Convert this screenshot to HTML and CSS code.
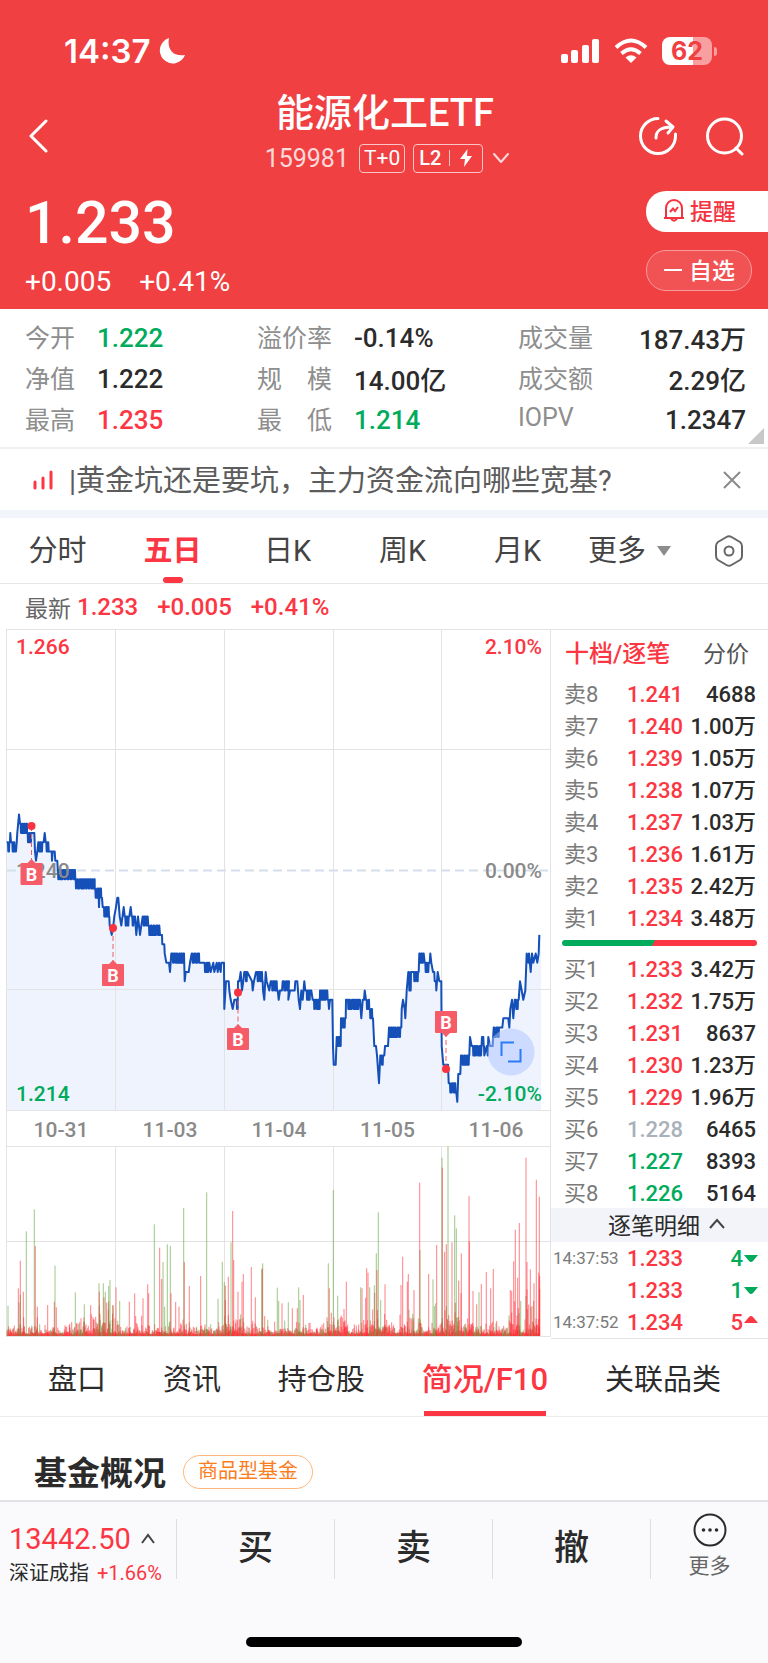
FILE: index.html
```html
<!DOCTYPE html>
<html lang="zh-CN">
<head>
<meta charset="utf-8">
<meta name="viewport" content="width=device-width, initial-scale=1">
<title>能源化工ETF 159981</title>
<link rel="stylesheet" href="styles.css">
</head>
<body>
<header class="hero">
  <div class="status">
    <span class="clock">14:37</span>
    <svg class="moon" width="28" height="28" viewBox="0 0 28 28"><path d="M11 1C9 11 14 20 27 18A13 13 0 1 1 11 1Z" fill="#fff"/></svg>
    <span class="status-right">
      <svg width="40" height="26" viewBox="0 0 40 26" fill="#fff"><rect x="1" y="16" width="7" height="9" rx="2"/><rect x="11" y="12" width="7" height="13" rx="2"/><rect x="22" y="7" width="7" height="18" rx="2"/><rect x="32" y="1" width="7" height="24" rx="2"/></svg>
      <svg width="34" height="26" viewBox="0 0 34 26" fill="none" stroke="#fff" stroke-width="4"><path d="M2 9.500Q17 -4.500 32 9.500"/><path d="M7.500 15.500Q17 7 26.500 15.500"/><path d="M17 25L11.500 19.500Q17 15 22.500 19.500Z" fill="#fff" stroke="none"/></svg>
      <span class="battery">62</span>
    </span>
  </div>
  <div class="nav">
    <button class="icon-btn back" aria-label="返回"><svg width="20" height="34" viewBox="0 0 20 34"><path d="M17 2L2 17L17 32" /></svg></button>
    <div class="title">
      <h1>能源化工ETF</h1>
      <div class="sub"><span class="code">159981</span><span class="tag">T+0</span><span class="tag tag-l2">L2<i></i><svg width="14" height="18" viewBox="0 0 14 18"><path d="M8.500 0L1 10H6L5 18L13 7H8Z" fill="#fff"/></svg></span>
      <svg class="caret" width="16" height="12" viewBox="0 0 16 12"><path d="M1 2L8 10L15 2"/></svg></div>
    </div>
    <div class="tools">
      <button class="icon-btn" aria-label="分享"><svg width="40" height="40" viewBox="0 0 40 40"><path d="M20 2.500A17.500 17.500 0 1 0 37.500 20V18M18 22C18 15 22 11 34 11M28 5L35 11L30 17"/></svg></button>
      <button class="icon-btn" aria-label="搜索"><svg width="40" height="40" viewBox="0 0 40 40"><circle cx="19.500" cy="20" r="17"/><path d="M31 32L37 38"/></svg></button>
    </div>
  </div>
  <div class="quote">
    <div>
      <div class="price">1.233</div>
      <div class="change"><span>+0.005</span><span>+0.41%</span></div>
    </div>
    <div class="pills">
      <button class="pill remind"><svg width="24" height="24" viewBox="0 0 24 24"><path d="M2 20H22M4 20V10A8 8 0 0 1 20 10V20M9 20.500Q12 25 15 20.500M8 14L11 10.500L13 13L16 9"/></svg>提醒</button>
      <button class="pill fav"><svg width="20" height="20" viewBox="0 0 20 20"><path d="M1 11H19"/></svg>自选</button>
    </div>
  </div>
</header>

<section class="stats">
  <dl>
    <div><dt>今开</dt><dd class="down">1.222</dd></div>
    <div><dt>净值</dt><dd>1.222</dd></div>
    <div><dt>最高</dt><dd class="up">1.235</dd></div>
  </dl>
  <dl class="wide">
    <div><dt>溢价率</dt><dd>-0.14%</dd></div>
    <div><dt>规　模</dt><dd>14.00亿</dd></div>
    <div><dt>最　低</dt><dd class="down">1.214</dd></div>
  </dl>
  <dl class="end">
    <div><dt>成交量</dt><dd>187.43万</dd></div>
    <div><dt>成交额</dt><dd>2.29亿</dd></div>
    <div><dt>IOPV</dt><dd>1.2347</dd></div>
  </dl>
  <svg class="corner" width="16" height="16" viewBox="0 0 16 16"><path d="M16 0V16H0Z" fill="#c8c8c8"/></svg>
</section>

<section class="notice">
  <svg width="22" height="20" viewBox="0 0 22 20" fill="none" stroke="#fc3642" stroke-width="3" stroke-linecap="round"><path d="M3 12V18M11 8V18M19 2V18"/></svg>
  <a href="#">|黄金坑还是要坑，主力资金流向哪些宽基?</a>
  <button class="close" aria-label="关闭"><svg width="18" height="18" viewBox="0 0 18 18"><path d="M1 1L17 17M17 1L1 17"/></svg></button>
</section>

<nav class="periods">
  <button>分时</button>
  <button class="on">五日</button>
  <button>日K</button>
  <button>周K</button>
  <button>月K</button>
  <button class="more">更多<svg width="16" height="12" viewBox="0 0 16 12"><path d="M1 1H15L8 11Z" fill="#8c8c8c"/></svg></button>
  <button class="set" aria-label="设置"><svg class="gear" width="32" height="34" viewBox="0 0 32 34"><path d="M13.500 3Q16 1.500 18.500 3L27 8Q29 9.500 29 12V22Q29 24.500 27 26L18.500 31Q16 32.500 13.500 31L5 26Q3 24.500 3 22V12Q3 9.500 5 8Z"/><circle cx="16" cy="17" r="4.500"/></svg></button>
</nav>

<p class="latest">最新<b>1.233</b><b>+0.005</b><b>+0.41%</b></p>

<main class="board">
  <svg class="chart" viewBox="0 0 551 708" role="img" aria-label="五日走势">
    <path id="area" class="area"/>
    <path class="grid" d="M6 .5H551M6 120.500H551M6 360.500H551M6 481.500H551M6 517.500H551M6 612.500H551M6 707.500H551M6.500 0V708M550.500 0V708M115.500 0V481M115.500 517V708M224.500 0V481M224.500 517V708M333.500 0V481M333.500 517V708M441.500 0V481M441.500 517V708"/>
    <path class="zero" d="M7 241.500H551"/>
    <path id="line" class="line"/>
    <text x="16" y="249" class="mid">1.240</text>
    <g id="volume"></g>
    <text x="16" y="25" class="t-up">1.266</text>
    <text x="542" y="25" class="t-up r">2.10%</text>
    <text x="542" y="249" class="mid r">0.00%</text>
    <g id="marks"></g>
    <circle cx="511" cy="423" r="23.500" fill="#a9c4ff" fill-opacity=".5"/>
    <path d="M501.500 427V413.500H514M508 432.500H520.500V420" fill="none" stroke="#2b7cf6" stroke-width="2"/>
    <text x="16" y="472" class="t-down">1.214</text>
    <text x="542" y="472" class="t-down r">-2.10%</text>
    <g class="dates"><text x="61" y="508">10-31</text><text x="170" y="508">11-03</text><text x="279" y="508">11-04</text><text x="387.500" y="508">11-05</text><text x="496" y="508">11-06</text></g>
  </svg>

  <aside class="book">
    <div class="book-tabs"><button class="on">十档/逐笔</button><button>分价</button></div>
    <table class="up-rows">
      <tr><th>卖8</th><td>1.241</td><td>4688</td></tr>
      <tr><th>卖7</th><td>1.240</td><td>1.00万</td></tr>
      <tr><th>卖6</th><td>1.239</td><td>1.05万</td></tr>
      <tr><th>卖5</th><td>1.238</td><td>1.07万</td></tr>
      <tr><th>卖4</th><td>1.237</td><td>1.03万</td></tr>
      <tr><th>卖3</th><td>1.236</td><td>1.61万</td></tr>
      <tr><th>卖2</th><td>1.235</td><td>2.42万</td></tr>
      <tr><th>卖1</th><td>1.234</td><td>3.48万</td></tr>
    </table>
    <div class="ratio"></div>
    <table class="up-rows">
      <tr><th>买1</th><td>1.233</td><td>3.42万</td></tr>
      <tr><th>买2</th><td>1.232</td><td>1.75万</td></tr>
      <tr><th>买3</th><td>1.231</td><td>8637</td></tr>
      <tr><th>买4</th><td>1.230</td><td>1.23万</td></tr>
      <tr><th>买5</th><td>1.229</td><td>1.96万</td></tr>
      <tr><th>买6</th><td class="flat">1.228</td><td>6465</td></tr>
      <tr><th>买7</th><td class="down">1.227</td><td>8393</td></tr>
      <tr><th>买8</th><td class="down">1.226</td><td>5164</td></tr>
    </table>
    <button class="detail">逐笔明细<svg width="16" height="12" viewBox="0 0 16 12"><path d="M1 10L8 2L15 10"/></svg></button>
    <table class="up-rows ticks">
      <tr><th>14:37:53</th><td>1.233</td><td class="down">4<svg width="14" height="16" viewBox="0 0 14 16"><path d="M0 5H14L9 11Q7 13 5 11Z" fill="#00ab5b"/></svg></td></tr>
      <tr><th></th><td>1.233</td><td class="down">1<svg width="14" height="16" viewBox="0 0 14 16"><path d="M0 5H14L9 11Q7 13 5 11Z" fill="#00ab5b"/></svg></td></tr>
      <tr><th>14:37:52</th><td>1.234</td><td class="up">5<svg width="14" height="16" viewBox="0 0 14 16"><path d="M0 9H14L9 3Q7 1 5 3Z" fill="#fc3642"/></svg></td></tr>
    </table>
  </aside>
</main>

<nav class="sections">
  <button>盘口</button><button>资讯</button><button>持仓股</button><button class="on">简况/F10</button><button>关联品类</button>
</nav>

<section class="overview"><h2>基金概况</h2><span>商品型基金</span></section>

<footer class="dock">
  <div class="actions">
    <button class="index"><span class="idx">13442.50<svg width="16" height="12" viewBox="0 0 16 12"><path d="M2 10L8 2L14 10"/></svg></span><span class="name">深证成指 <em>+1.66%</em></span></button>
    <button class="act">买</button>
    <button class="act">卖</button>
    <button class="act">撤</button>
    <button class="act last"><svg width="34" height="34" viewBox="0 0 34 34"><circle cx="17" cy="17" r="15.500" fill="none" stroke="#2b2b2b" stroke-width="2"/><g fill="#2b2b2b"><circle cx="10.500" cy="17" r="1.800"/><circle cx="17" cy="17" r="1.800"/><circle cx="23.500" cy="17" r="1.800"/></g></svg>更多</button>
  </div>
  <div class="home"></div>
</footer>
<script src="chart.js"></script>
</body>
</html>
```
FILE: styles.css
```css
* { box-sizing: border-box; }
body {
  margin: 0;
  background: #fff;
  color: #2b2b2b;
  font-family: Roboto, "Noto Sans CJK SC", sans-serif;
  font-size: 24px;
}
button {
  border: 0;
  padding: 0;
  background: none;
  color: inherit;
  font: inherit;
}
svg { display: block; flex: none; }
h1, h2, p, dl, dd { margin: 0; }
a { color: inherit; text-decoration: none; }
.up { color: #fc3642; }
.down { color: #00ab5b; }

.hero {
  background: #f04042;
  color: #fff;
  padding-bottom: 11px;
}
.status {
  display: flex;
  align-items: center;
  height: 68px;
  padding: 34px 52px 0 64px;
}
.clock { font: 600 33px/34px Inter, sans-serif; }
.moon { margin-left: 8px; }
.status-right {
  display: flex;
  align-items: center;
  gap: 14px;
  margin-left: auto;
}
.battery {
  position: relative;
  width: 50px;
  margin-right: 4px;
  border-radius: 8px;
  background: linear-gradient(90deg, #fff 62%, #f89fa0 62%);
  color: #f04042;
  font: 700 25px/28px Inter, sans-serif;
  text-align: center;
}
.battery::after {
  content: "";
  position: absolute;
  right: -5px;
  top: 10px;
  width: 3px;
  height: 9px;
  border-radius: 0 3px 3px 0;
  background: #f89fa0;
}
.nav {
  display: grid;
  grid-template-columns: 1fr auto 1fr;
  align-items: center;
  padding: 23px 23px 0 29px;
}
.icon-btn svg, .caret {
  fill: none;
  stroke: #fff;
  stroke-width: 3;
  stroke-linecap: round;
  stroke-linejoin: round;
}
.back { justify-self: start; margin-top: 6px; }
.title { padding-right: 4px; }
.title h1 {
  font-size: 38px;
  font-weight: 500;
  line-height: 44px;
  text-align: center;
}
.sub {
  display: flex;
  align-items: center;
  height: 32px;
  margin-top: 7px;
  padding-left: 4px;
}
.code { font-size: 25px; margin-right: 10px; opacity: .8; }
.tag {
  display: flex;
  align-items: center;
  height: 29px;
  padding: 0 4px;
  margin-right: 8px;
  border: 1px solid #fbc5c6;
  border-radius: 4px;
  font-size: 21px;
}
.tag-l2 { font-size: 20px; font-weight: 500; padding: 0 9px 0 5px; }
.tag-l2 i { width: 1px; height: 16px; margin: 0 9px 0 8px; background: #fbc5c6; }
.sub .caret { margin-left: 2px; stroke-width: 2; opacity: .8; }
.tools { display: flex; gap: 27px; justify-self: end; margin-top: 6px; }
.quote {
  display: flex;
  justify-content: space-between;
  padding-left: 25px;
}
.price {
  margin-top: 17px;
  font-size: 59px;
  font-weight: 500;
  line-height: 64px;
}
.change {
  display: flex;
  gap: 28px;
  margin-top: 11px;
  font-size: 28px;
  line-height: 32px;
}
.pills {
  display: flex;
  flex-direction: column;
  gap: 18px;
  width: 122px;
  margin-top: 17px;
}
.pill {
  display: flex;
  align-items: center;
  height: 41px;
  padding: 0 0 3px 16px;
  font-size: 23px;
  font-weight: 500;
}
.pill svg { fill: none; stroke: currentColor; stroke-width: 2; margin-right: 4px; }
.remind { background: #fff; color: #f5333f; border-radius: 20px 0 0 20px; }
.fav {
  width: 106px;
  border: 1px solid #f79a9b;
  border-radius: 20px;
  background: #f15355;
}
.fav svg { margin-right: 6px; }

.stats {
  position: relative;
  display: grid;
  grid-template-columns: 232fr 261fr 228fr;
  padding: 8px 22px 7px 25px;
  border-bottom: 2px solid #f0f0f0;
}
.stats dl div { display: flex; align-items: center; height: 41px; }
.stats dt { width: 72px; padding-bottom: 4px; color: #8e8e8e; font-size: 25px; }
.stats dd { font-size: 26px; font-weight: 500; white-space: nowrap; }
.stats .wide dt { width: 97px; }
.stats .end div { justify-content: space-between; }
.stats .end dt { width: auto; }
.corner { position: absolute; right: 4px; bottom: 3px; }

.notice {
  display: flex;
  align-items: center;
  height: 69px;
  padding: 0 27px 0 32px;
  border-bottom: 8px solid #f2f5fa;
  color: #5c5c5c;
  font-size: 29px;
}
.notice a { margin-left: 15px; padding-bottom: 4px; }
.close { margin-left: auto; }
.close svg { stroke: #8a8a8a; stroke-width: 2; }

.periods {
  display: grid;
  grid-template-columns: repeat(5, 115fr) 97fr 96fr;
  align-items: center;
  height: 66px;
  border-bottom: 1px solid #e6e6e6;
  color: #444;
}
.periods button { position: relative; font-size: 29px; line-height: 64px; }
.periods .on { color: #fc3642; font-weight: 700; }
.periods .on::after {
  content: "";
  position: absolute;
  left: 50%;
  bottom: 0;
  width: 20px;
  height: 6px;
  margin-left: -10px;
  border-radius: 3px;
  background: #fc3642;
}
.periods .more { display: flex; align-items: center; justify-content: flex-end; gap: 10px; }
.periods .set { justify-self: end; margin-right: 23px; }
.gear { fill: none; stroke: #666; stroke-width: 2; }

.latest {
  display: flex;
  align-items: center;
  gap: 19px;
  height: 45px;
  padding-left: 25px;
  color: #666;
  font-size: 23px;
}
.latest b { color: #fc3642; font-size: 24px; font-weight: 500; }
.latest b:first-of-type { margin-left: -13px; }

.board { display: grid; grid-template-columns: 551fr 217fr; align-items: start; }
.chart { width: 100%; height: auto; font-size: 21px; font-weight: 500; }
.grid { fill: none; stroke: #e3e3e3; }
.area { fill: #eef3fe; }
.line { fill: none; stroke: #1450b8; stroke-width: 2; stroke-linejoin: round; }
.zero { stroke: #d3dfea; stroke-dasharray: 9 5; stroke-width: 2; }
.mid, .dates { fill: #8a8a8a; }
.t-up { fill: #fc3642; }
.t-down { fill: #00ab5b; }
.r { text-anchor: end; }
.dates { text-anchor: middle; }
.v-up { stroke: #ff2630; stroke-opacity: .58; }
.v-down { stroke: #5a9e32; stroke-opacity: .58; }
.mark-box { fill: #f65c68; }
.mark-line { stroke: #f65c68; stroke-dasharray: 5 3; }
.mark-dot { fill: #fa3340; }
.mark-b { fill: #fff; font-size: 18px; font-weight: 700; text-anchor: middle; }

.book { border-top: 1px solid #e3e3e3; border-bottom: 1px solid #e3e3e3; }
.book-tabs {
  display: flex;
  justify-content: space-between;
  height: 49px;
  padding: 0 19px 6px 14px;
  color: #555;
  font-size: 23px;
}
.book-tabs .on { color: #fc3642; font-size: 24px; font-weight: 500; }
.book table {
  width: 100%;
  table-layout: fixed;
  border-collapse: collapse;
  line-height: 32px;
}
.book tr { height: 32px; }
.book th, .book td { padding: 0; white-space: nowrap; font-size: 22px; font-weight: 500; }
.book th { width: 35%; padding-left: 13px; color: #7a7a7a; font-weight: 400; text-align: left; }
.book td:nth-child(2) { width: 27%; text-align: left; }
.book td:last-child { padding-right: 12px; text-align: right; }
.up-rows td:nth-child(2) { color: #fc3642; }
.up-rows td.flat { color: #a9b1bb; }
.up-rows td.down { color: #00ab5b; }
.ratio {
  height: 6px;
  margin: 5px 11px 8px;
  border-radius: 3px;
  background: linear-gradient(120deg, #00ab5b 47%, #fc3642 47%);
}
.detail {
  display: flex;
  align-items: center;
  justify-content: center;
  gap: 9px;
  width: 100%;
  height: 34px;
  margin-top: -2px;
  padding: 0 0 3px 14px;
  background: #f3f4f9;
  font-size: 23px;
}
.detail svg, .idx svg { fill: none; stroke: #444; stroke-width: 2; }
.book .ticks { line-height: 31px; }
.book .ticks th { padding-left: 2px; font-size: 17px; }
.book .ticks td:last-child { padding-right: 10px; }
.ticks td svg { display: inline-block; margin-left: 1px; }

.sections {
  display: flex;
  justify-content: space-between;
  height: 78px;
  padding: 0 47px 0 48px;
  border-bottom: 1px solid #ececec;
}
.sections button { position: relative; padding-bottom: 2px; font-size: 29px; }
.sections .on { color: #fc3642; font-size: 31px; font-weight: 500; }
.sections .on::after {
  content: "";
  position: absolute;
  left: 2px;
  right: 2px;
  bottom: 0;
  height: 5px;
  background: #fc3642;
}
.overview {
  display: flex;
  align-items: center;
  gap: 17px;
  height: 83px;
  padding: 30px 34px 0;
}
.overview h2 { font-size: 33px; font-weight: 700; line-height: 40px; }
.overview span {
  height: 34px;
  margin-bottom: 4px;
  padding: 0 14px;
  border: 1px solid #fdb77e;
  border-radius: 17px;
  color: #fb7d1e;
  font-size: 20px;
  line-height: 30px;
}
.dock { padding-bottom: 17px; border-top: 2px solid #e2e2e4; background: #fafafc; }
.actions {
  display: grid;
  grid-template-columns: 176fr 158fr 158fr 158fr 118fr;
  padding-top: 11px;
}
.index {
  display: flex;
  flex-direction: column;
  align-items: flex-start;
  padding: 7px 0 0 9px;
  text-align: left;
}
.idx { display: flex; align-items: center; gap: 9px; color: #fc3642; font-size: 29px; line-height: 38px; }
.name { font-size: 20px; line-height: 30px; white-space: nowrap; }
.name em { margin-left: 3px; color: #fc3642; font-style: normal; }
.act {
  height: 60px;
  margin-top: 6px;
  border-left: 1px solid #dedee2;
  font-size: 35px;
  font-weight: 500;
  line-height: 60px;
}
.last {
  display: flex;
  flex-direction: column;
  align-items: center;
  gap: 4px;
  color: #666;
  font-size: 21px;
  font-weight: 400;
  line-height: 30px;
}
.last svg { margin-top: -6px; }
.home {
  width: 36%;
  height: 10px;
  margin: 49px auto 0;
  border-radius: 5px;
  background: #000;
}
```
FILE: chart.js
```js
// Horizontal unit: 3 samples per chart pixel. Levels are ticks from the 1.240 reference.
const SAMPLES = 3, MID = 241, TICK = 9.27, BASE = 707;

let seed = 7;
const random = () => (seed = (seed * 16807) % 2147483647) / 2147483647;

// [from, to, high, low] swings between two levels; [at, level] is a single point.
const walk = [
  [20,29,3,2],[31,4],[33,48,3,2],[50,3],[52,4],[57,6],[60,80,5,4],[81,92,4,3],[94,4],[103,4],[105,2],[108,1],
  [112,2],[115,131,3,2],[134,4],[137,146,3,2],[155,2],[156,1],[158,2],[164,2],[166,1],[172,1],[175,-1],
  [177,226,0,-1],[228,-2],[231,283,-1,-2],[284,295,-2,-3],[297,-4],[299,305,-2,-3],[308,-4],[310,327,-4,-5],
  [329,-6],[335,-7],[340,-6],[343,-5],[348,-4],[352,-3],[355,-3],[359,-5],[364,-6],[371,-4],[374,388,-5,-6],
  [392,-4],[395,405,-5,-6],[409,-7],[414,-5],[420,-7],[424,-6],[428,442,-5,-6],[445,475,-6,-7],[478,-6],
  [480,-7],[486,-7],[487,-8],[493,-8],[494,-9],[499,-10],[507,-10],[510,-11],[514,551,-9,-10],[554,-12],[557,-11],
  [566,-11],[570,-10],[575,602,-9,-10],[608,-10],[612,627,-10,-11],[632,-11],[640,-10],[643,-11],[650,-10],
  [653,-11],[657,-10],[662,-11],[664,-10],[672,-10],[673,-15],[678,-12],[686,-12],[688,-13],[692,-14],[698,-15],
  [703,-14],[706,712,-14,-15],[714,-12],[718,-12],[722,-11],[726,-13],[730,-12],[733,741,-11,-12],[756,-12],
  [758,-13],[762,-12],[768,787,-11,-12],[789,-13],[793,-14],[797,-11],[800,-12],[808,-13],[812,832,-12,-13],
  [836,-14],[840,-13],[846,-13],[848,866,-12,-13],[865,-14],[870,-13],[884,-13],[886,-12],[892,-12],[896,-14],
  [900,-15],[904,-13],[908,-14],[913,-12],[916,-13],[918,934,-13,-14],[938,958,-14,-15],[960,985,-13,-14],
  [987,-15],[990,-14],[997,-14],[999,-19],[1001,-21],[1007,-21],[1010,1021,-18,-19],[1023,1036,-16,-17],
  [1038,-14],[1040,1080,-14,-15],[1084,-16],[1088,-14],[1092,-14],[1094,-13],[1098,1106,-14,-15],
  [1108,1118,-15,-16],[1123,-19],[1128,-19],[1131,-20],[1137,-23],[1141,1152,-20,-21],[1155,-19],[1164,-19],
  [1167,1203,-17,-18],[1205,-15],[1209,-14],[1214,-15],[1216,-16],[1220,-13],[1225,1237,-11,-13],
  [1240,1255,-11,-12],[1258,1270,-9,-10],[1274,1288,-10,-11],[1291,-9],[1294,-10],[1299,1308,-11,-12],
  [1309,-13],[1313,-11],[1318,-12],[1324,-12],[1325,-19],[1330,-21],[1344,-21],[1346,1368,-23,-24],[1372,-25],
  [1375,-22],[1381,-22],[1383,1407,-20,-21],[1410,-18],[1415,-19],[1417,1442,-19,-20],[1446,1451,-18,-19],
  [1453,-20],[1460,-19],[1463,-20],[1465,-18],[1470,-19],[1478,-19],[1481,1500,-17,-18],[1507,-17],[1510,-16],
  [1525,-16],[1528,-17],[1531,-15],[1536,-14],[1540,-16],[1544,1555,-14,-15],[1560,-12],[1565,-13],[1570,-14],
  [1576,-13],[1580,-9],[1585,-10],[1587,-9],[1592,-11],[1596,-9],[1600,-10],[1607,-9],[1612,-10],[1616,-9],[1618,-7]
];

const points = [];
for (const s of walk) {
  if (s.length === 2) { points.push(s); continue; }
  let high = true;
  for (let x = s[0]; x <= s[1]; high = !high) {
    const level = high ? s[2] : s[3];
    const hold = random() < .35 ? 4 : 2;
    points.push([x, level]);
    points.push([Math.min(x + hold, s[1] + 1), level]);
    x += hold + 1;
  }
}
const route = points.map(([x, n]) => (x / SAMPLES).toFixed(1) + " " + (MID - n * TICK).toFixed(1)).join("L");
document.getElementById("line").setAttribute("d", "M" + route);
document.getElementById("area").setAttribute("d", "M" + route + "H541V481H7Z");

// Tall volume bars as [sample, height in thirds of a pixel].
const falls = [[79,314],[103,380],[61,123],[165,211],[226,131],[253,95],[297,158],[310,158],[316,133],[326,150],[330,168],
  [359,105],[463,335],[489,222],[494,88],[502,275],[511,270],[551,384],[620,431],[654,112],[667,223],[673,162],[693,281],
  [785,200],[788,218],[832,145],[836,105],[865,101],[896,146],[900,108],[985,218],[1000,438],[1013,121],[1082,146],
  [1109,146],[1123,152],[1129,248],[1135,371],[1260,258],[1299,170],[1307,98],[1326,535],[1344,568],[1364,362],[1369,323],
  [1437,131],[1303,90],[1562,105]];
const rises = [[61,226],[55,143],[70,133],[106,270],[112,88],[143,93],[163,103],[169,86],[298,133],[312,116],[348,146],
  [338,93],[388,103],[404,128],[429,113],[443,155],[446,128],[479,265],[485,171],[513,128],[527,102],[537,88],[553,222],
  [568,150],[602,180],[676,108],[685,178],[698,375],[701,228],[714,133],[726,163],[730,186],[754,207],[766,116],[787,203],
  [846,98],[877,83],[910,123],[892,83],[988,143],[1039,163],[1086,143],[1100,203],[1104,190],[1131,198],[1155,155],
  [1208,238],[1203,153],[1222,163],[1225,186],[1242,138],[1259,460],[1286,186],[1310,273],[1327,505],[1334,253],[1339,275],
  [1356,281],[1376,166],[1384,248],[1407,420],[1408,283],[1419,135],[1430,95],[1444,156],[1459,192],[1472,143],[1480,201],
  [1546,319],[1558,339],[1541,224],[1553,175],[1531,138],[1535,135],[1578,535],[1581,222],[1591,200],[1602,158],[1609,469],
  [1618,418],[1616,190],[1619,180]];
// Busy stretches: [from, to, strength].
const busy = [[20,75,1.4],[225,345,1.5],[670,735,2],[980,1045,1.4],[1085,1160,1.9],[1200,1270,1.7],[1325,1420,2],[1525,1560,2],[1575,1620,2.6]];

const bars = [];
for (let x = 21; x < 1620; x += 1) {
  const zone = busy.find(([a, b]) => x >= a && x <= b);
  const h = 5 - Math.log(random() + .002) * 12 * (zone ? zone[2] : .75);
  bars.push([random() < .22 ? "v-down" : "v-up", x, h]);
}
falls.forEach(([x, h]) => bars.push(["v-down", x, h]));
rises.forEach(([x, h]) => bars.push(["v-up", x, h]));

const NS = "http://www.w3.org/2000/svg";
const put = (parent, tag, attrs, text) => {
  const el = document.createElementNS(NS, tag);
  for (const k in attrs) el.setAttribute(k, attrs[k]);
  if (text) el.textContent = text;
  parent.appendChild(el);
};
const volume = document.getElementById("volume");
for (const [kind, x, h] of bars) {
  put(volume, "path", { class: kind, d: "M" + (x / SAMPLES).toFixed(1) + " " + BASE + "v-" + (h / SAMPLES).toFixed(1) });
}

// Buy markers: dot position, box centre, and which side of the box points to the dot.
const marks = document.getElementById("marks");
for (const [x, dot, box] of [[31.5, 197, 245], [113, 299, 346], [238, 363.5, 410], [446, 440, 393]]) {
  const side = dot < box ? -1 : 1, edge = box + side * 11;
  put(marks, "path", { class: "mark-line", d: "M" + x + " " + dot + "V" + edge });
  put(marks, "rect", { class: "mark-box", x: x - 11, y: box - 11, width: 22, height: 22, rx: 1 });
  put(marks, "path", { class: "mark-box", d: "M" + (x - 4) + " " + edge + "l4 " + side * 4 + "l4 " + -side * 4 + "Z" });
  put(marks, "circle", { class: "mark-dot", cx: x, cy: dot, r: 4 });
  put(marks, "text", { class: "mark-b", x: x, y: box + 7 }, "B");
}
```
